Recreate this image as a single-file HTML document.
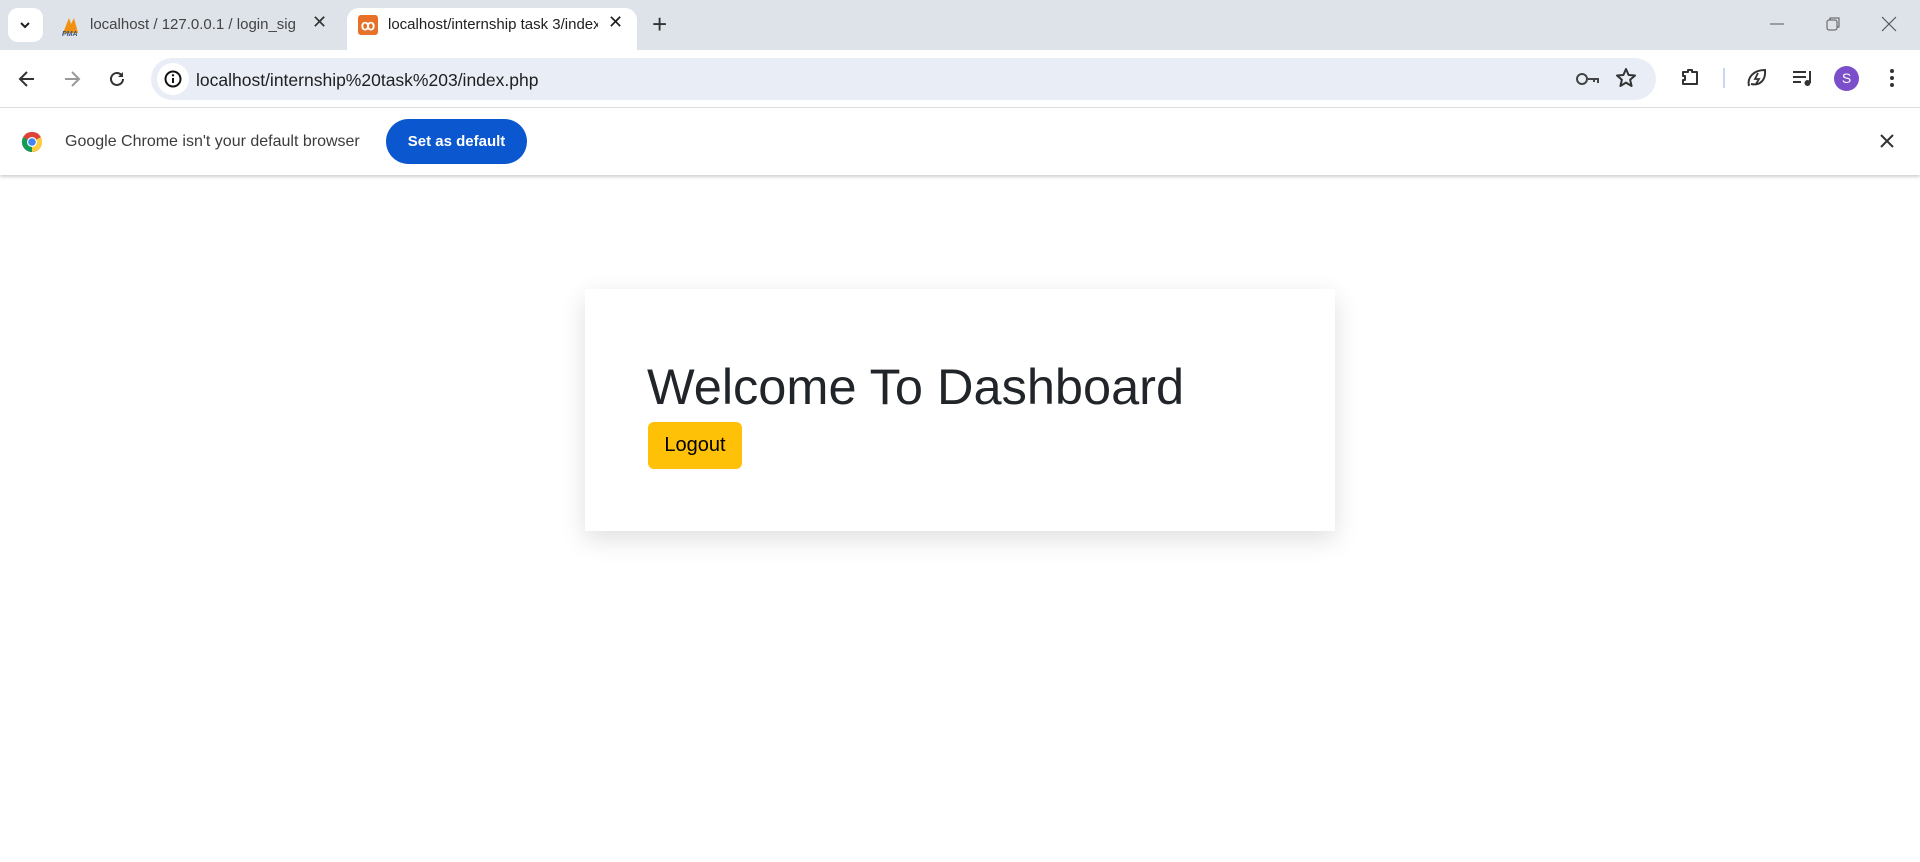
<!DOCTYPE html>
<html><head><meta charset="utf-8"><style>
*{margin:0;padding:0;box-sizing:border-box}
body{width:1920px;height:862px;background:#fff;font-family:"Liberation Sans",sans-serif;position:relative;overflow:hidden}
.abs{position:absolute}
#strip{left:0;top:0;width:1920px;height:50px;background:#dee3ea}
#toolbar{left:0;top:50px;width:1920px;height:58px;background:#fff;border-bottom:1px solid #e0e0e0}
#info{left:0;top:108px;width:1920px;height:67px;background:#fff;box-shadow:0 2px 3px rgba(0,0,0,.18)}
.tabtxt{font-size:15px;color:#1f1f1f;white-space:nowrap;overflow:hidden}
svg{position:absolute}
</style></head><body>
<div id="strip" class="abs"></div>
<div class="abs" style="left:8px;top:8px;width:35px;height:34px;background:#fff;border-radius:10px"></div>
<svg style="left:17px;top:17px" width="16" height="16"><path d="M4 6l4 4 4-4" stroke="#1f1f1f" stroke-width="2" fill="none"/></svg>
<svg style="left:60px;top:15px" width="22" height="22"><path d="M3 18L9 3l2 6 3-6 4 15z" fill="#f29111"/><text x="2" y="21" font-size="7" font-style="italic" font-weight="bold" fill="#34547a" font-family="Liberation Sans">PMA</text></svg>
<div class="abs tabtxt" style="left:90px;top:16px;width:205px;color:#444">localhost / 127.0.0.1 / login_signup</div>
<div class="abs" style="left:312px;top:12px;font-size:18px;color:#333">✕</div>
<div class="abs" style="left:347px;top:8px;width:290px;height:48px;background:#fff;border-radius:12px 12px 0 0"></div>
<div class="abs" style="left:358px;top:15px;width:20px;height:20px;background:#e8712a;border-radius:3px;color:#fff;font-size:14px;text-align:center;line-height:20px;font-weight:bold">ꝏ</div>
<div class="abs tabtxt" style="left:388px;top:16px;width:210px">localhost/internship task 3/index.php</div>
<div class="abs" style="left:608px;top:12px;font-size:18px;color:#1f1f1f">✕</div>
<div class="abs" style="left:652px;top:9px;font-size:26px;color:#333;font-weight:300">+</div>
<svg style="left:1768px;top:16px" width="20" height="16"><path d="M2 8h14" stroke="#555" stroke-width="1"/></svg>
<svg style="left:1825px;top:16px" width="16" height="16"><rect x="2" y="4" width="10" height="10" rx="2" fill="none" stroke="#555"/><path d="M5 4V2h9v9h-2" fill="none" stroke="#555"/></svg>
<svg style="left:1880px;top:15px" width="18" height="18"><path d="M2 2l14 14M16 2L2 16" stroke="#555" stroke-width="1.2"/></svg>
<div id="toolbar" class="abs"></div>
<svg style="left:17px;top:69px" width="20" height="20"><path d="M17 10H4M10 3l-7 7 7 7" stroke="#333" stroke-width="2" fill="none"/></svg>
<svg style="left:62px;top:69px" width="20" height="20"><path d="M3 10h13M10 3l7 7-7 7" stroke="#999" stroke-width="2" fill="none"/></svg>
<svg style="left:107px;top:69px" width="20" height="20"><path d="M16 10a6 6 0 1 1-2-4.5" stroke="#333" stroke-width="2" fill="none"/><path d="M16 3v5h-5z" fill="#333"/></svg>
<div class="abs" style="left:151px;top:58px;width:1505px;height:42px;background:#e9edf6;border-radius:21px"></div>
<div class="abs" style="left:157px;top:63px;width:32px;height:32px;background:#fff;border-radius:16px"></div>
<svg style="left:163px;top:69px" width="20" height="20"><circle cx="10" cy="10" r="7.5" fill="none" stroke="#111" stroke-width="2"/><path d="M10 9v5" stroke="#111" stroke-width="2"/><circle cx="10" cy="6.3" r="1.2" fill="#111"/></svg>
<div class="abs" style="left:196px;top:70px;font-size:17.5px;color:#1f1f1f">localhost/internship%20task%203/index.php</div>
<svg style="left:1575px;top:69px" width="26" height="20"><circle cx="7" cy="10" r="5" fill="none" stroke="#444" stroke-width="2"/><path d="M12 10h11v4M19 10v3" stroke="#444" stroke-width="2" fill="none"/></svg>
<svg style="left:1614px;top:66px" width="24" height="24"><path d="M12 3l2.6 6 6.4.5-4.9 4.2 1.5 6.3L12 16.6 6.4 20l1.5-6.3L3 9.5 9.4 9z" fill="none" stroke="#333" stroke-width="2" stroke-linejoin="round"/></svg>
<svg style="left:1679px;top:66px" width="24" height="24"><path d="M4 6h5V4h4v2h5v12H4v-4h2v-4H4z" fill="none" stroke="#333" stroke-width="2" stroke-linejoin="round"/></svg>
<div class="abs" style="left:1723px;top:68px;width:2px;height:20px;background:#c8d8f0"></div>
<svg style="left:1745px;top:66px" width="24" height="24"><path d="M4 20C2 12 8 4 20 4c1 10-5 16-14 14" fill="none" stroke="#333" stroke-width="2"/><path d="M13 7l-3 6h4l-3 5" fill="none" stroke="#333" stroke-width="1.8"/></svg>
<svg style="left:1791px;top:67px" width="24" height="22"><path d="M2 5h13M2 10h13M2 15h8" stroke="#333" stroke-width="2"/><path d="M19 4v12" stroke="#333" stroke-width="2"/><circle cx="16.5" cy="16" r="3" fill="#333"/></svg>
<div class="abs" style="left:1834px;top:66px;width:25px;height:25px;border-radius:50%;background:#7b4fc9;color:#fff;font-size:14px;text-align:center;line-height:25px">S</div>
<svg style="left:1884px;top:66px" width="16" height="24"><circle cx="8" cy="5" r="2" fill="#333"/><circle cx="8" cy="12" r="2" fill="#333"/><circle cx="8" cy="19" r="2" fill="#333"/></svg>
<div id="info" class="abs"></div>
<svg style="left:21px;top:131px" width="22" height="22" viewBox="0 0 22 22"><circle cx="11" cy="11" r="10" fill="#db4437"/><path d="M11 11L2.3 6A10 10 0 0 0 11 21z" fill="#0f9d58"/><path d="M11 11l8.7-5A10 10 0 0 1 11 21z" fill="#ffcd40"/><path d="M11 11L2.3 6A10 10 0 0 1 19.7 6z" fill="#db4437"/><circle cx="11" cy="11" r="5" fill="#fff"/><circle cx="11" cy="11" r="3.8" fill="#4285f4"/></svg>
<div class="abs" style="left:65px;top:133px;font-size:16px;color:#3c3c3c">Google Chrome isn't your default browser</div>
<div class="abs" style="left:386px;top:119px;width:141px;height:45px;background:#0b57d0;border-radius:23px;color:#fff;font-size:15px;font-weight:bold;text-align:center;line-height:45px">Set as default</div>
<svg style="left:1879px;top:133px" width="16" height="16"><path d="M2 2l12 12M14 2L2 14" stroke="#333" stroke-width="2"/></svg>
<div class="abs" style="left:585px;top:289px;width:750px;height:242px;background:#fff;box-shadow:0 8px 24px rgba(0,0,0,.13)"></div>
<div class="abs" style="left:647px;top:357px;font-size:50.5px;color:#212529;white-space:nowrap">Welcome To Dashboard</div>
<div class="abs" style="left:648px;top:422px;width:94px;height:47px;background:#ffc107;border-radius:6px;font-size:20px;color:#000;text-align:center;line-height:47px">Logout</div>
</body></html>
